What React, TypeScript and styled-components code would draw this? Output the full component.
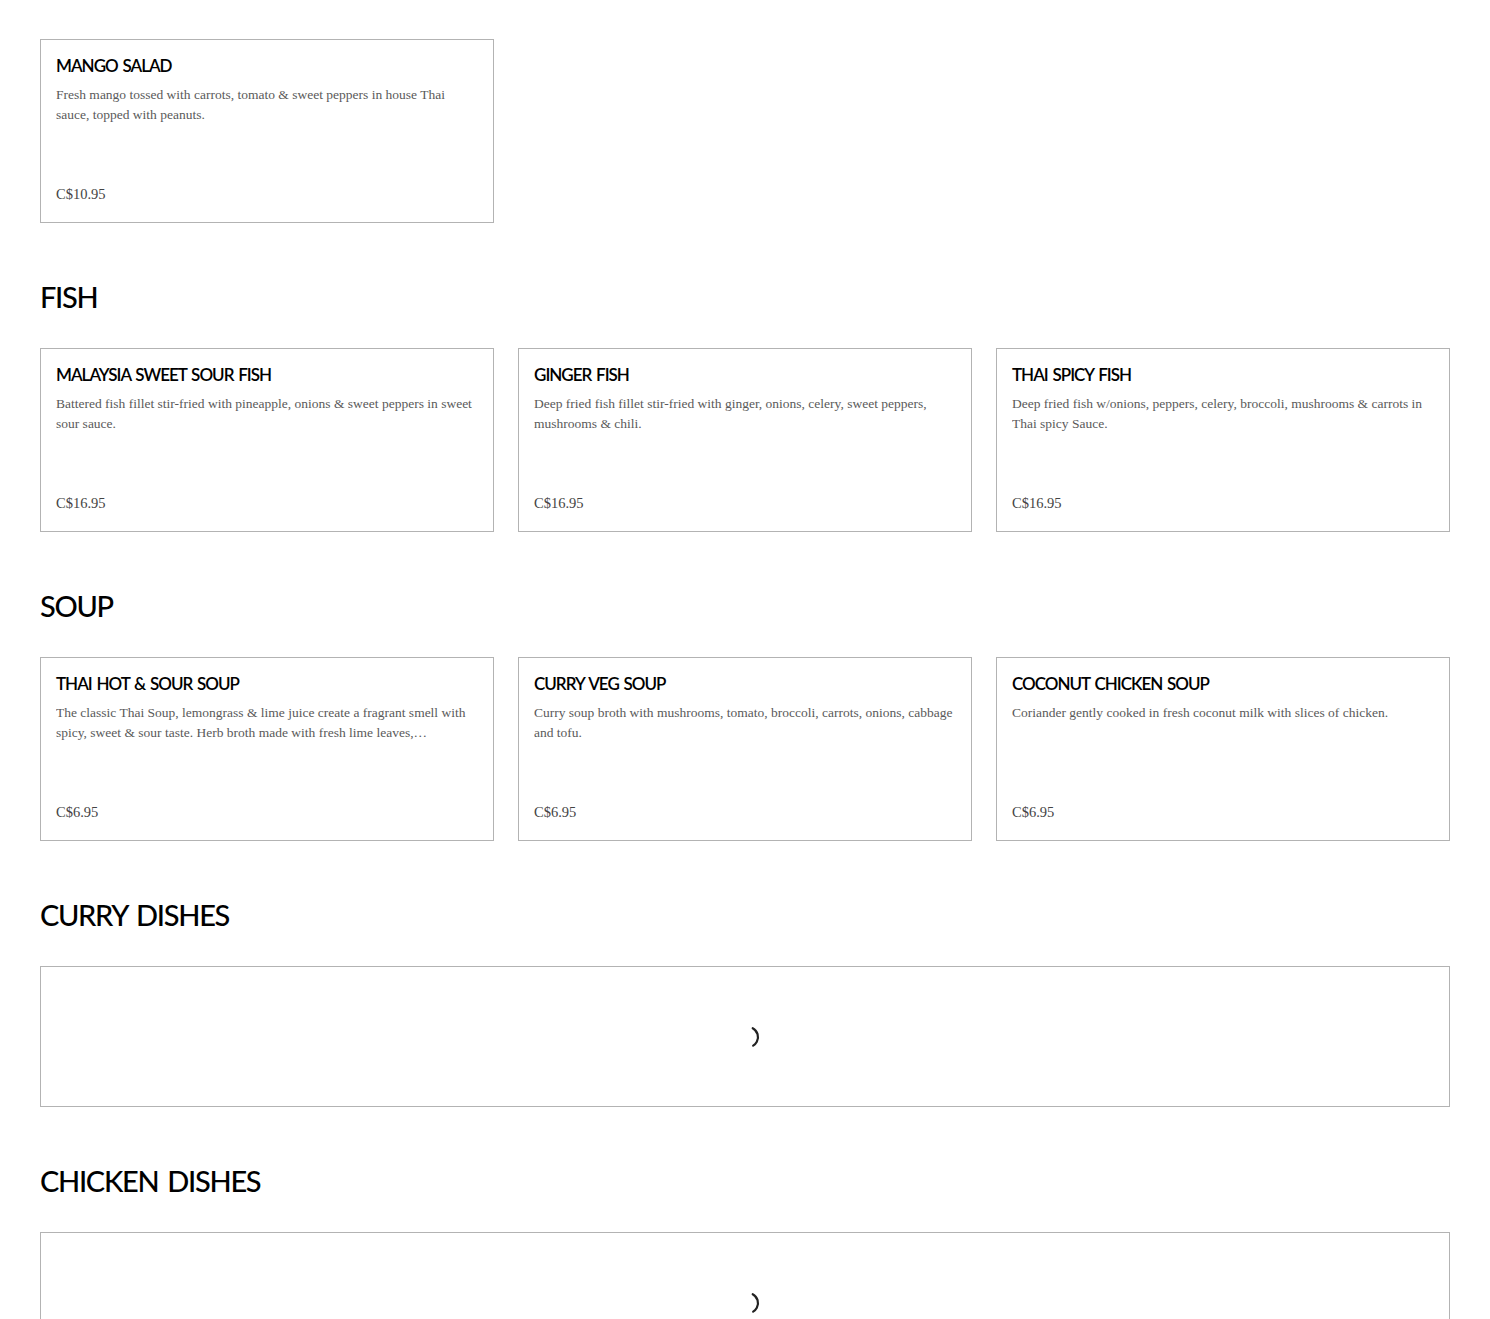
import React from "react";
import styled, { createGlobalStyle } from "styled-components";

const Global = createGlobalStyle`
  html, body { margin: 0; padding: 0; background: #fff; }
  body { font-family: "Liberation Serif", serif; }
`;

const Page = styled.main`
  padding: 0 40px;
  margin-top: -32px;
  display: flex;
  flex-direction: column;
  gap: 54px;
`;

const Section = styled.section`
  display: flex;
  flex-direction: column;
  gap: 31px;
`;

const Heading = styled.h2`
  margin: 0;
  font-family: Lato, "Liberation Sans", sans-serif;
  font-weight: 500;
  font-size: 29px;
  line-height: 40px;
  color: #000;
  letter-spacing: -1.3px;
  word-spacing: 3px;
  text-transform: uppercase;
`;

const Grid = styled.div`
  display: grid;
  grid-template-columns: repeat(3, 1fr);
  gap: 24px;
`;

const Card = styled.article`
  box-sizing: border-box;
  height: 184px;
  border: 1px solid #b3b3b3;
  padding: 14px 15px 18px;
  display: flex;
  flex-direction: column;
`;

const Title = styled.h3`
  margin: 0 0 7px;
  font-family: Lato, "Liberation Sans", sans-serif;
  font-weight: 600;
  font-size: 17px;
  line-height: 24px;
  color: #000;
  letter-spacing: -1px;
  word-spacing: 1.5px;
`;

const Desc = styled.p`
  margin: 0;
  font-family: "Liberation Serif", serif;
  font-size: 13.5px;
  line-height: 20px;
  color: #5a5a5a;
  display: -webkit-box;
  -webkit-line-clamp: 2;
  -webkit-box-orient: vertical;
  overflow: hidden;
`;

const Price = styled.span`
  margin-top: auto;
  font-family: "Liberation Serif", serif;
  font-size: 14.5px;
  line-height: 20px;
  color: #444;
`;

const Loading = styled.div`
  box-sizing: border-box;
  height: 141px;
  border: 1px solid #b3b3b3;
  display: flex;
  align-items: center;
  justify-content: center;
`;

const SpinnerSvg = styled.svg`
  width: 26px;
  height: 26px;
  transform: translate(3px, 0);
`;

function Spinner() {
  return (
    <SpinnerSvg viewBox="0 0 26 26">
      <circle
        cx="13"
        cy="13"
        r="10"
        fill="none"
        stroke="#222"
        strokeWidth="2.2"
        strokeLinecap="round"
        strokeDasharray="21 100"
        transform="rotate(-62 13 13)"
      />
    </SpinnerSvg>
  );
}

type Item = { name: string; desc: string; price: string };

const sections: { title: string; items?: Item[] }[] = [
  {
    title: "Salad",
    items: [
      {
        name: "MANGO SALAD",
        desc: "Fresh mango tossed with carrots, tomato & sweet peppers in house Thai sauce, topped with peanuts.",
        price: "C$10.95",
      },
    ],
  },
  {
    title: "Fish",
    items: [
      {
        name: "MALAYSIA SWEET SOUR FISH",
        desc: "Battered fish fillet stir-fried with pineapple, onions & sweet peppers in sweet sour sauce.",
        price: "C$16.95",
      },
      {
        name: "GINGER FISH",
        desc: "Deep fried fish fillet stir-fried with ginger, onions, celery, sweet peppers, mushrooms & chili.",
        price: "C$16.95",
      },
      {
        name: "THAI SPICY FISH",
        desc: "Deep fried fish w/onions, peppers, celery, broccoli, mushrooms & carrots in Thai spicy Sauce.",
        price: "C$16.95",
      },
    ],
  },
  {
    title: "Soup",
    items: [
      {
        name: "THAI HOT & SOUR SOUP",
        desc: "The classic Thai Soup, lemongrass & lime juice create a fragrant smell with spicy, sweet & sour taste. Herb broth made with fresh lime leaves, lemongrass, galangal & mushrooms.",
        price: "C$6.95",
      },
      {
        name: "CURRY VEG SOUP",
        desc: "Curry soup broth with mushrooms, tomato, broccoli, carrots, onions, cabbage and tofu.",
        price: "C$6.95",
      },
      {
        name: "COCONUT CHICKEN SOUP",
        desc: "Coriander gently cooked in fresh coconut milk with slices of chicken.",
        price: "C$6.95",
      },
    ],
  },
  { title: "Curry Dishes" },
  { title: "Chicken Dishes" },
];

export default function App() {
  return (
    <>
      <Global />
      <Page>
        {sections.map((s) => (
          <Section key={s.title}>
            <Heading>{s.title}</Heading>
            {s.items ? (
              <Grid>
                {s.items.map((it) => (
                  <Card key={it.name}>
                    <Title>{it.name}</Title>
                    <Desc>{it.desc}</Desc>
                    <Price>{it.price}</Price>
                  </Card>
                ))}
              </Grid>
            ) : (
              <Loading>
                <Spinner />
              </Loading>
            )}
          </Section>
        ))}
      </Page>
    </>
  );
}
